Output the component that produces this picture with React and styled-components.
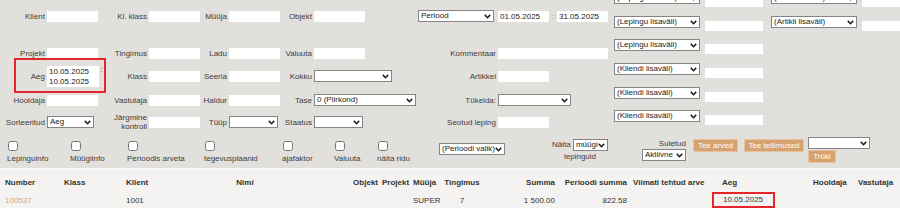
import React from "react";
import styled, { createGlobalStyle } from "styled-components";

const GlobalStyle = createGlobalStyle`
  html, body { margin: 0; padding: 0; background: #e2e0dc; }
  body {
    font-family: "Liberation Sans", Arial, sans-serif;
    font-size: 8px;
    color: #3d3d3d;
    overflow: hidden;
  }
  * { box-sizing: border-box; }
`;

const Page = styled.div`
  width: 900px;
  height: 208px;
  overflow: hidden;
`;

const Filters = styled.div`
  display: flex;
  align-items: flex-start;
  gap: 4px;
  height: 136px;
`;

const LeftForm = styled.div`
  width: 610px;
  flex: none;
`;

const FormRow = styled.div`
  position: relative;
  display: grid;
  grid-template-columns: 47px 57px 45px 52px 28px 54px 31px 104px 80px 112px;
  align-items: center;
  height: ${(p) => p.$h || 16}px;
  margin-top: ${(p) => p.$top || 0}px;
`;

const Label = styled.label`
  text-align: right;
  padding-right: 2px;
  line-height: 9px;
  white-space: nowrap;
`;

const Field = styled.div`
  display: flex;
  align-items: ${(p) => (p.$top ? "flex-start" : "center")};
`;

const TextInput = styled.input`
  width: ${(p) => p.$w || 51}px;
  height: 11px;
  border: none;
  padding: 0 2px;
  margin: 0;
  font: inherit;
  color: #222;
  background: #fff;
  outline: none;
`;

const SelectBox = styled.span`
  position: relative;
  display: inline-flex;
  flex: none;
  vertical-align: middle;
  width: ${(p) => p.$w}px;
  height: ${(p) => p.$h || 12}px;
`;

const Select = styled.select`
  appearance: none;
  width: 100%;
  height: 100%;
  margin: 0;
  padding: 0 8px 0 2px;
  font: inherit;
  line-height: 10px;
  color: #222;
  background: #fff;
  border: 1px solid #858585;
  border-radius: 0;
  outline: none;
`;

const Chevron = styled.svg`
  position: absolute;
  right: 3px;
  top: 50%;
  width: 7px;
  height: 5px;
  margin-top: -2px;
  pointer-events: none;
`;

const DateArea = styled.textarea`
  width: 52px;
  height: 21px;
  border: none;
  padding: 1px 2px;
  margin: 0;
  font: inherit;
  line-height: 10px;
  color: #222;
  resize: none;
  overflow: hidden;
  outline: none;
`;

const Colon = styled.span`
  width: ${(p) => p.$w || 8}px;
  text-align: center;
  line-height: ${(p) => (p.$top ? "8px" : "11px")};
  color: #777;
`;

const Highlight = styled.div`
  position: absolute;
  left: 14px;
  top: -3px;
  width: 92px;
  height: 35px;
  border: 2px solid #e3262b;
  pointer-events: none;
`;

const SideForm = styled.div`
  flex: 1;
  min-width: 0;
  margin-top: -8px;
`;

const SideRow = styled.div`
  display: flex;
  align-items: flex-start;
  height: 23.7px;
  white-space: nowrap;
`;

const SideInput = styled(TextInput)`
  width: 58px;
  height: 10px;
  flex: none;
  margin: 5px 8px 0 5px;
`;

const Controls = styled.div`
  display: flex;
  align-items: flex-start;
  height: 32px;
  padding-left: 7px;
`;

const Checks = styled.div`
  display: grid;
  grid-template-columns: 63px 57px 77px 78px 52px 43px 62px;
  margin-top: 5px;
`;

const CheckItem = styled.label`
  display: flex;
  flex-direction: column;
  align-items: flex-start;
  gap: 3px;
  line-height: 9px;
  white-space: nowrap;
`;

const Checkbox = styled.input.attrs({ type: "checkbox" })`
  width: 10px;
  height: 10px;
  margin: 0 0 0 1px;
`;

const ShowCell = styled.div`
  width: 60px;
  margin: 3px 0 0 ${(p) => p.$left}px;
  text-align: center;
  line-height: 12px;
  white-space: nowrap;
`;

const StackCell = styled.div`
  display: flex;
  flex-direction: column;
  align-items: ${(p) => p.$items || "flex-end"};
  gap: ${(p) => p.$gap || 0}px;
  margin: ${(p) => p.$mt}px 0 0 ${(p) => p.$left}px;
  line-height: 10px;
`;

const Button = styled.button`
  width: ${(p) => p.$w}px;
  height: 13px;
  margin: ${(p) => p.$mt || 0}px 0 0 ${(p) => p.$left || 0}px;
  padding: 0;
  font: inherit;
  color: #fff;
  background: #d8a170;
  border: 1px solid #e7c3a0;
  border-radius: 1px;
  white-space: nowrap;
`;

const Results = styled.div`
  height: 40px;
  padding-top: 4px;
  background: #f4f3f1;
  border-top: 1px solid #fbfaf9;
`;

const ResultRow = styled.div`
  display: grid;
  grid-template-columns: 62px 62px 66px 110px 80px 31px 31px 40px 75px 72px 83px 99px 45px 44px;
  height: 18px;
  align-items: center;
  color: #333;
  font-weight: ${(p) => (p.$head ? "bold" : "normal")};
`;

const Cell = styled.div`
  padding: 0 ${(p) => (p.$align === "right" ? 2 : 0)}px 0 ${(p) => p.$pad ?? 2}px;
  text-align: ${(p) => p.$align || "left"};
  white-space: nowrap;
  color: ${(p) => (p.$link ? "#dba77a" : "inherit")};
`;

const Marked = styled.span`
  display: inline-block;
  height: 16px;
  line-height: 12px;
  padding: 0 10px 0 9px;
  border: 2px solid #e3262b;
`;

const columns = [
  { title: "Number", pad: 5 },
  { title: "Klass" },
  { title: "Klient" },
  { title: "Nimi", align: "center", pad: 0 },
  { title: "Objekt", align: "right", pad: 0 },
  { title: "Projekt" },
  { title: "Müüja" },
  { title: "Tingimus", align: "center", pad: 0 },
  { title: "Summa", align: "right", pad: 0 },
  { title: "Perioodi summa", align: "right", pad: 0 },
  { title: "Viimati tehtud arve", pad: 4 },
  { title: "Aeg", pad: 10 },
  { title: "Hooldaja" },
  { title: "Vastutaja" },
];

const row = ["100537", "", "1001", "", "", "", "SUPER", "7", "1 500.00", "822.58", "", "10.05.2025", "", ""];

const sideRows = [
  ["(Lepingu lisaväli)", "(Artikli lisaväli)"],
  ["(Lepingu lisaväli)", "(Artikli lisaväli)"],
  ["(Lepingu lisaväli)"],
  ["(Kliendi lisaväli)"],
  ["(Kliendi lisaväli)"],
  ["(Kliendi lisaväli)"],
];

const checks = ["Lepinguinfo", "Müügiinfo", "Perioodis arveta", "tegevusplaanid", "ajafaktor", "Valuuta", "näita ridu"];

const Opt = ({ w, h, text }) => (
  <SelectBox $w={w} $h={h}>
    <Select defaultValue={text}>
      <option>{text}</option>
    </Select>
    <Chevron viewBox="0 0 7 5">
      <path d="M0.8 0.9 L3.5 3.7 L6.2 0.9" fill="none" stroke="#222" strokeWidth="1.6" />
    </Chevron>
  </SelectBox>
);

export default function App() {
  return (
    <Page>
      <GlobalStyle />
      <Filters>
        <LeftForm>
          <FormRow $top={8}>
            <Label>Klient</Label>
            <Field><TextInput /></Field>
            <Label>Kl. klass</Label>
            <Field><TextInput /></Field>
            <Label>Müüja</Label>
            <Field><TextInput /></Field>
            <Label>Objekt</Label>
            <Field><TextInput /></Field>
            <Field><Opt w={76} text="Periood" /></Field>
            <Field>
              <TextInput defaultValue="01.05.2025" />
              <Colon>:</Colon>
              <TextInput defaultValue="31.05.2025" />
            </Field>
          </FormRow>

          <FormRow $top={21}>
            <Label>Projekt</Label>
            <Field><TextInput /></Field>
            <Label>Tingimus</Label>
            <Field><TextInput /></Field>
            <Label>Ladu</Label>
            <Field><TextInput /></Field>
            <Label>Valuuta</Label>
            <Field><TextInput /></Field>
            <Label>Kommentaar</Label>
            <Field><TextInput $w={110} /></Field>
          </FormRow>

          <FormRow $h={30}>
            <Highlight />
            <Label>Aeg</Label>
            <Field $top>
              <DateArea defaultValue={"10.05.2025\n10.05.2025"} />
              <Colon $w={5} $top>:</Colon>
            </Field>
            <Label>Klass</Label>
            <Field><TextInput /></Field>
            <Label>Seeria</Label>
            <Field><TextInput /></Field>
            <Label>Kokku</Label>
            <Field><Opt w={78} text="" /></Field>
            <Label>Artikkel</Label>
            <Field><TextInput /></Field>
          </FormRow>

          <FormRow $top={1}>
            <Label>Hooldaja</Label>
            <Field><TextInput /></Field>
            <Label>Vastutaja</Label>
            <Field><TextInput /></Field>
            <Label>Haldur</Label>
            <Field><TextInput /></Field>
            <Label>Tase</Label>
            <Field><Opt w={102} text="0 (Piirkond)" /></Field>
            <Label>Tükelda:</Label>
            <Field><Opt w={73} text="" /></Field>
          </FormRow>

          <FormRow $top={5}>
            <Label>Sorteeritud</Label>
            <Field><Opt w={47} text="Aeg" /></Field>
            <Label>
              Järgmine
              <br />
              kontroll
            </Label>
            <Field><TextInput /></Field>
            <Label>Tüüp</Label>
            <Field><Opt w={49} text="" /></Field>
            <Label>Staatus</Label>
            <Field><Opt w={49} text="" /></Field>
            <Label>Seotud leping</Label>
            <Field><TextInput /></Field>
          </FormRow>
        </LeftForm>

        <SideForm>
          {sideRows.map((items, i) => (
            <SideRow key={i}>
              {items.map((text) => (
                <React.Fragment key={text}>
                  <Opt w={86} text={text} />
                  <SideInput />
                </React.Fragment>
              ))}
            </SideRow>
          ))}
        </SideForm>
      </Filters>

      <Controls>
        <Checks>
          {checks.map((c) => (
            <CheckItem key={c}>
              <Checkbox />
              {c}
            </CheckItem>
          ))}
        </Checks>
        <StackCell $mt={7} $left={0}>
          <Opt w={66} text="(Perioodi valik)" />
        </StackCell>
        <ShowCell $left={45}>
          Näita <Opt w={35} text="müügi" />
          <br />
          lepinguid
        </ShowCell>
        <StackCell $mt={3} $left={32}>
          <span>Suletud</span>
          <Opt w={44} h={12} text="Aktiivne" />
        </StackCell>
        <Button $w={45} $mt={3} $left={7}>Tee arved</Button>
        <Button $w={60} $mt={3} $left={6}>Tee tellimused</Button>
        <StackCell $mt={1} $left={4} $items="flex-start" $gap={1}>
          <Opt w={62} text="" />
          <Button $w={28}>Trüki</Button>
        </StackCell>
      </Controls>

      <Results>
        <ResultRow $head>
          {columns.map((c) => (
            <Cell key={c.title} $align={c.align} $pad={c.pad}>{c.title}</Cell>
          ))}
        </ResultRow>
        <ResultRow>
          {row.map((v, i) => (
            <Cell
              key={i}
              $align={columns[i].align}
              $pad={i === 11 ? 0 : columns[i].pad}
              $link={i === 0}
            >
              {i === 11 ? <Marked>{v}</Marked> : v}
            </Cell>
          ))}
        </ResultRow>
      </Results>
    </Page>
  );
}
